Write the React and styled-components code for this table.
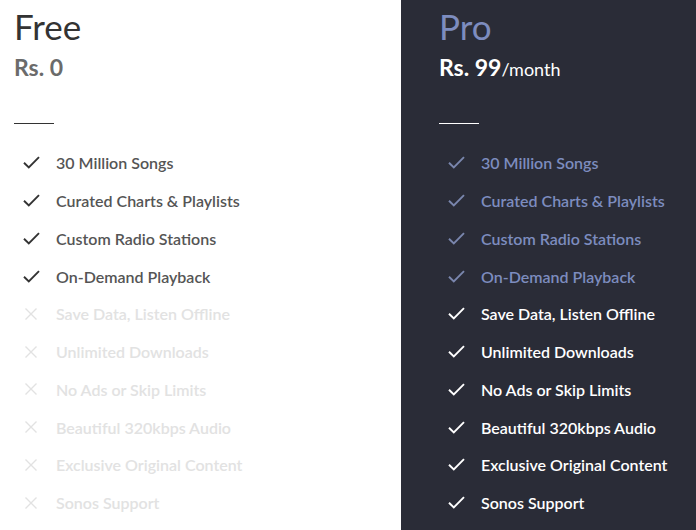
import React from 'react';
import styled, { createGlobalStyle } from 'styled-components';

const GlobalStyle = createGlobalStyle`
  html, body {
    margin: 0;
    padding: 0;
    background: #ffffff;
  }
  body {
    font-family: Lato, "Open Sans", sans-serif;
    -webkit-font-smoothing: antialiased;
  }
`;

const Plans = styled.div`
  display: grid;
  grid-template-columns: 401px 1fr;
  width: 696px;
  height: 530px;
  overflow: hidden;
`;

const Plan = styled.section`
  background: ${p => (p.dark ? '#2a2c37' : '#ffffff')};
  padding: 6px 0 0 ${p => (p.dark ? '38px' : '14px')};
`;

const Title = styled.h2`
  margin: 0;
  font-size: 35px;
  font-weight: 400;
  line-height: 40px;
  color: ${p => (p.dark ? '#7d8cbf' : '#333333')};
`;

const Price = styled.div`
  margin-top: 6px;
  height: 30px;
  font-size: 23px;
  font-weight: 700;
  line-height: 30px;
  color: ${p => (p.dark ? '#ffffff' : '#6b6b6b')};
`;

const Period = styled.span`
  font-size: 18px;
  font-weight: 400;
`;

const Rule = styled.hr`
  width: 40px;
  margin: 41px 0 20px;
  border: 0;
  border-top: 1px solid ${p => (p.dark ? '#ffffff' : '#333333')};
`;

const List = styled.ul`
  list-style: none;
  margin: 0;
  padding: 0;
`;

const Item = styled.li`
  display: flex;
  align-items: center;
  height: 37.75px;
  font-size: 16px;
  font-weight: 600;
  color: ${p => p.color};
`;

const Icon = styled.span`
  display: flex;
  justify-content: center;
  width: 18px;
  margin: 0 16px 0 8px;
`;

const Check = ({ color }) => (
  <svg width="17" height="13" viewBox="0 0 17 13" fill="none">
    <path d="M1 6.8 L5.8 11.5 L16 1.2" stroke={color} strokeWidth="1.9" />
  </svg>
);

const Cross = ({ color }) => (
  <svg width="14" height="14" viewBox="0 0 14 14" fill="none">
    <path d="M1.5 1.5 L12.5 12.5 M12.5 1.5 L1.5 12.5" stroke={color} strokeWidth="1.4" />
  </svg>
);

const features = [
  '30 Million Songs',
  'Curated Charts & Playlists',
  'Custom Radio Stations',
  'On-Demand Playback',
  'Save Data, Listen Offline',
  'Unlimited Downloads',
  'No Ads or Skip Limits',
  'Beautiful 320kbps Audio',
  'Exclusive Original Content',
  'Sonos Support',
];

const FREE_COUNT = 4;

export default function App() {
  return (
    <>
      <GlobalStyle />
      <Plans>
        <Plan>
          <Title>Free</Title>
          <Price>Rs. 0</Price>
          <Rule />
          <List>
            {features.map((f, i) => {
              const on = i < FREE_COUNT;
              return (
                <Item key={f} color={on ? '#555555' : '#e2e2e2'}>
                  <Icon>{on ? <Check color="#333333" /> : <Cross color="#e2e2e2" />}</Icon>
                  {f}
                </Item>
              );
            })}
          </List>
        </Plan>
        <Plan dark>
          <Title dark>Pro</Title>
          <Price dark>
            Rs. 99<Period>/month</Period>
          </Price>
          <Rule dark />
          <List>
            {features.map((f, i) => {
              const basic = i < FREE_COUNT;
              const c = basic ? '#7d8cbf' : '#ffffff';
              return (
                <Item key={f} color={c}>
                  <Icon><Check color={basic ? '#7a86ad' : '#ffffff'} /></Icon>
                  {f}
                </Item>
              );
            })}
          </List>
        </Plan>
      </Plans>
    </>
  );
}
